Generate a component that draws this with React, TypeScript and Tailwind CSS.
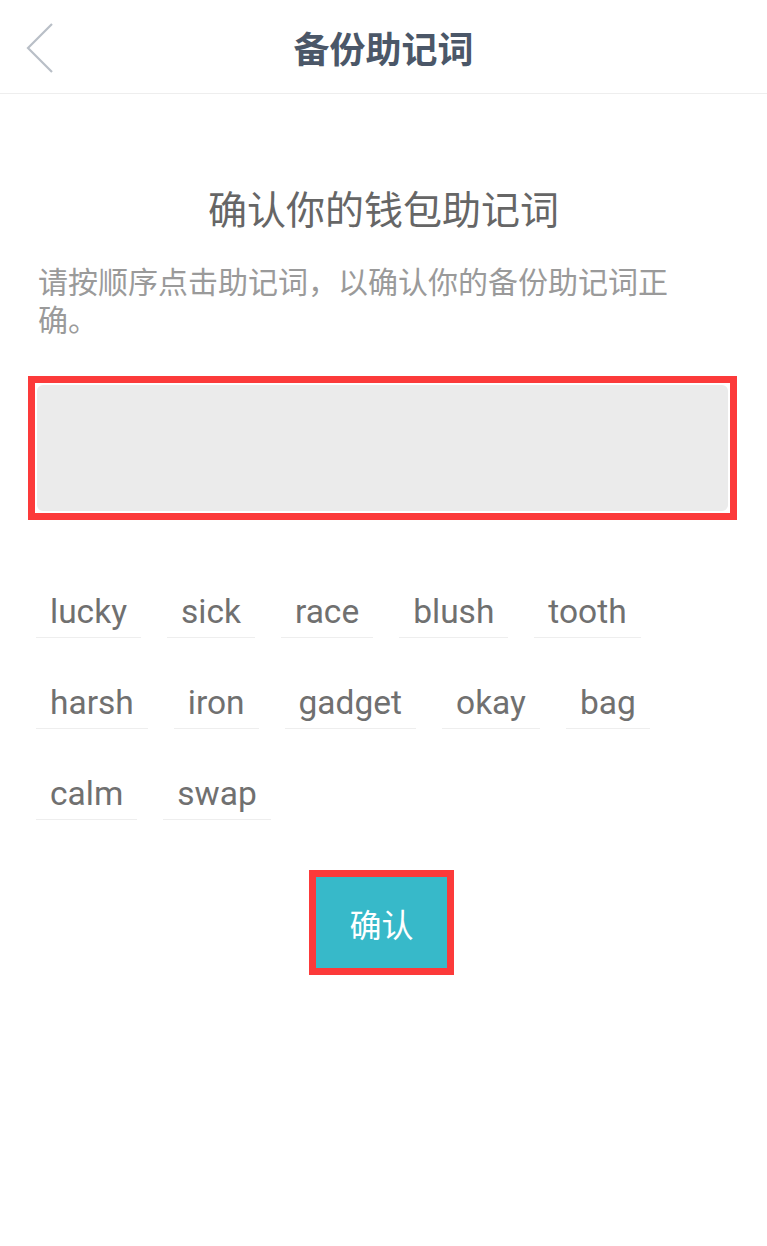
import React from 'react';

const rows: string[][] = [
    ['lucky', 'sick', 'race', 'blush', 'tooth'],
    ['harsh', 'iron', 'gadget', 'okay', 'bag'],
    ['calm', 'swap'],
];

const cjk = "font-['Noto_Sans_CJK_SC','Noto_Sans',sans-serif]";

const BackIcon = () => (
    <svg width="30" height="52" viewBox="0 0 30 52" fill="none">
        <path d="M27 2 L3 26 L27 50" stroke="#b9bfc7" strokeWidth="2.2" />
    </svg>
);

const WordChip: React.FC<{ word: string }> = ({ word }) => (
    <div className="h-[52px] px-[14px] border-b border-[#eeeeee] flex items-center text-[33.5px] leading-none text-[#707070] font-['Roboto',sans-serif]">
        {word}
    </div>
);

export default function App() {
    return (
        <div className={`w-[767px] h-[1246px] bg-white ${cjk}`}>
            <div className="h-[94px] border-b border-[#eeeeee] grid grid-cols-[80px_1fr_80px] items-center">
                <button className="pl-[25px] pt-[2px] flex items-center">
                    <BackIcon />
                </button>
                <div className="text-center text-[36px] font-bold text-[#4b5768] leading-none">备份助记词</div>
                <div />
            </div>

            <div className="mt-[89px] text-center text-[39px] leading-[49px] text-[#666666]">确认你的钱包助记词</div>

            <p className="mt-[29px] ml-[38px] w-[655px] text-[30px] leading-[38px] text-[#9a9a9a]">
                请按顺序点击助记词，以确认你的备份助记词正确。
            </p>

            <div className="mt-[39px] ml-[28px] w-[709px] h-[144px] border-[7px] border-[#fc3a3a] p-[2px]">
                <div className="w-full h-full bg-[#ebebeb] rounded-md" />
            </div>

            <div className="mt-[66px] ml-[36px] w-[704px] flex flex-wrap gap-x-[26px] gap-y-[39px]">
                {rows.flat().map((w) => (
                    <WordChip key={w} word={w} />
                ))}
            </div>

            <div className="mt-[50px] flex justify-center">
                <button className="w-[145px] h-[105px] border-[7px] border-[#fc3a3a] bg-[#37b9c9] text-white text-[32px] flex items-center justify-center ml-[-4px]">
                    确认
                </button>
            </div>
        </div>
    );
}
